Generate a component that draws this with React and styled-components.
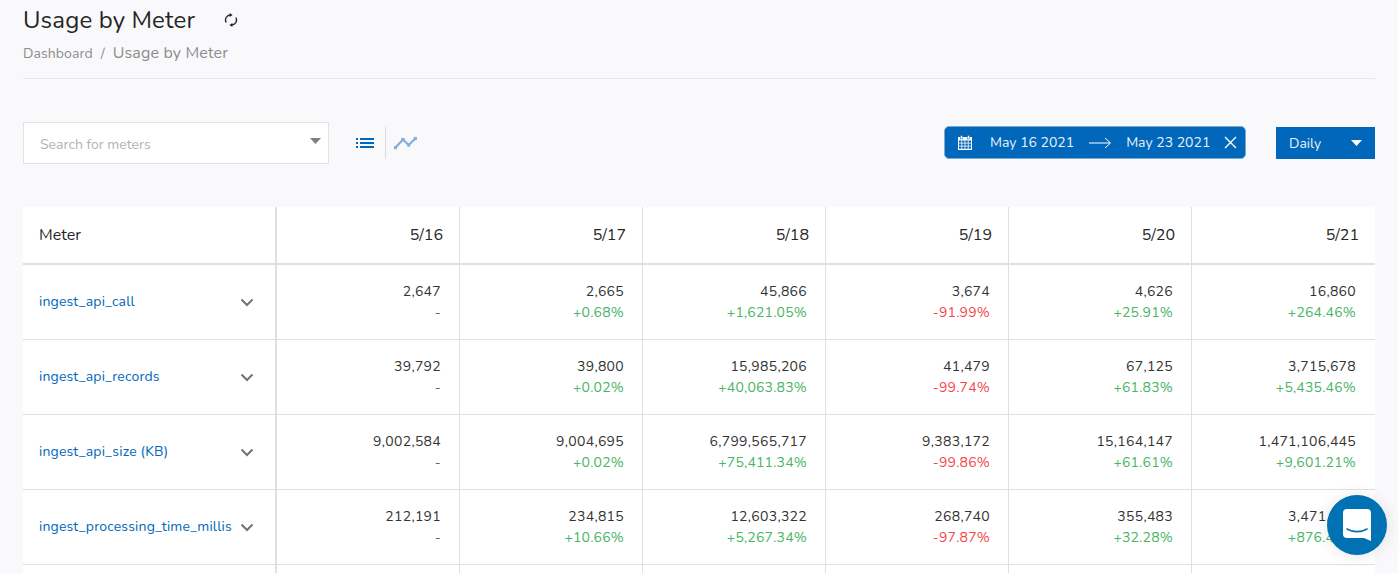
import React from 'react';
import styled, { createGlobalStyle } from 'styled-components';

const GlobalStyle = createGlobalStyle`
  html, body {
    margin: 0;
    height: 573px;
    overflow: hidden;
    background: #f9f9fb;
    font-family: "Nunito", "Lato", "Open Sans", sans-serif;
    color: #262626;
  }
`;

const dates = ['5/16', '5/17', '5/18', '5/19', '5/20', '5/21'];

const meters = [
  {
    name: 'ingest_api_call',
    values: [
      ['2,647', '-'], ['2,665', '+0.68%'], ['45,866', '+1,621.05%'],
      ['3,674', '-91.99%'], ['4,626', '+25.91%'], ['16,860', '+264.46%'],
    ],
  },
  {
    name: 'ingest_api_records',
    values: [
      ['39,792', '-'], ['39,800', '+0.02%'], ['15,985,206', '+40,063.83%'],
      ['41,479', '-99.74%'], ['67,125', '+61.83%'], ['3,715,678', '+5,435.46%'],
    ],
  },
  {
    name: 'ingest_api_size (KB)',
    values: [
      ['9,002,584', '-'], ['9,004,695', '+0.02%'], ['6,799,565,717', '+75,411.34%'],
      ['9,383,172', '-99.86%'], ['15,164,147', '+61.61%'], ['1,471,106,445', '+9,601.21%'],
    ],
  },
  {
    name: 'ingest_processing_time_millis',
    values: [
      ['212,191', '-'], ['234,815', '+10.66%'], ['12,603,322', '+5,267.34%'],
      ['268,740', '-97.87%'], ['355,483', '+32.28%'], ['3,471,000', '+876.41%'],
    ],
  },
];

const Page = styled.div`
  padding: 0 23px;
  height: 573px;
  box-sizing: border-box;
  overflow: hidden;
`;

const Header = styled.header`
  height: 78px;
  border-bottom: 1px solid #e6e6e8;
  box-sizing: content-box;
`;

const TitleRow = styled.div`
  display: flex;
  align-items: center;
  height: 40px;
`;

const Title = styled.h1`
  margin: 0;
  font-size: 24px;
  font-weight: 400;
  line-height: 40px;
  letter-spacing: 0.15px;
  color: #262626;
`;

const Refresh = styled.svg`
  display: block;
  width: 14px;
  height: 14px;
  margin-left: 29px;
`;

const Breadcrumbs = styled.nav`
  display: flex;
  align-items: baseline;
  height: 24px;
  padding-top: 1px;
  line-height: 24px;
  color: #8c8c8c;
`;

const Crumb = styled.span`
  font-size: ${p => (p.$last ? '16px' : '14px')};
  letter-spacing: ${p => (p.$last ? '0.15px' : '0.08px')};
`;

const Slash = styled.span`
  margin: 0 8px;
  font-size: 14px;
`;

const Toolbar = styled.div`
  display: flex;
  align-items: center;
  margin-top: 43px;
  height: 42px;
`;

const Search = styled.div`
  display: flex;
  align-items: center;
  justify-content: space-between;
  width: 306px;
  height: 42px;
  box-sizing: border-box;
  padding: 3px 7px 0 16px;
  background: #fff;
  border: 1px solid #e2e2e2;
  font-size: 14px;
  color: #b3b3b3;
`;

const SearchCaret = styled.svg`
  width: 11px;
  height: 6px;
  margin-top: -7px;
  fill: #7f7f7f;
`;

const ViewToggle = styled.div`
  display: flex;
  align-items: center;
  margin-left: 27px;
`;

const ViewIcon = styled.svg`
  display: block;
  width: ${p => p.$w}px;
  height: 16px;
`;

const ViewDivider = styled.div`
  width: 1px;
  height: 32px;
  margin: 0 8px 0 11px;
  background: #dcdcdc;
`;

const DatePicker = styled.div`
  display: flex;
  align-items: center;
  width: 302px;
  height: 33px;
  box-sizing: border-box;
  margin-left: auto;
  margin-top: -1px;
  padding: 0 8px 0 12px;
  background: #0067ba;
  border: 1px solid #7aa9d2;
  border-radius: 5px;
  color: #e8f1f9;
  font-size: 14px;
`;

const DateText = styled.span`
  white-space: nowrap;
`;

const DateArrow = styled.svg`
  flex: none;
  width: 24px;
  height: 12px;
  margin: 0 14px;
`;

const CalendarIcon = styled.svg`
  flex: none;
  width: 16px;
  height: 16px;
  margin-right: 17px;
`;

const ClearIcon = styled.svg`
  flex: none;
  width: 13px;
  height: 13px;
  margin-left: auto;
`;

const Interval = styled.div`
  display: flex;
  align-items: center;
  justify-content: space-between;
  width: 99px;
  height: 32px;
  box-sizing: border-box;
  margin-left: 30px;
  padding: 0 13px;
  background: #0067ba;
  color: #e8f1f9;
  font-size: 14px;
`;

const IntervalCaret = styled.svg`
  width: 11px;
  height: 6px;
  fill: #fff;
`;

const Card = styled.div`
  margin-top: 43px;
  background: #fff;
  border-radius: 4px 4px 0 0;
  overflow: hidden;
`;

const Table = styled.table`
  width: 1352px;
  table-layout: fixed;
  border-collapse: separate;
  border-spacing: 0;
`;

const HeadCell = styled.th`
  height: 56px;
  padding: 0 16px;
  box-sizing: content-box;
  font-size: 16px;
  font-weight: 400;
  color: #262626;
  text-align: ${p => (p.$left ? 'left' : 'right')};
  border-bottom: 2px solid #e0e0e0;
  border-right: ${p => (p.$last ? 'none' : p.$left ? '2px solid #e0e0e0' : '1px solid #e0e0e0')};
`;

const MeterCell = styled.td`
  height: 74px;
  padding: 0 21px 0 16px;
  border-bottom: 1px solid #e0e0e0;
  border-right: 2px solid #e0e0e0;
`;

const MeterInner = styled.div`
  display: flex;
  align-items: center;
  justify-content: space-between;
`;

const MeterName = styled.a`
  margin-top: -2px;
  font-size: 14px;
  letter-spacing: 0.17px;
  color: #0067ba;
  white-space: nowrap;
`;

const Chevron = styled.svg`
  flex: none;
  width: 14px;
  height: 9px;
`;

const ValueCell = styled.td`
  height: 74px;
  padding: 0 ${p => (p.$last ? '19px' : '18px')} 0 0;
  text-align: right;
  font-size: 14px;
  line-height: 21px;
  letter-spacing: 0.2px;
  border-bottom: 1px solid #e0e0e0;
  border-right: ${p => (p.$last ? 'none' : '1px solid #e0e0e0')};
`;

const Count = styled.div`
  color: #333;
  letter-spacing: 0.3px;
  white-space: nowrap;
`;

const toneColor = { up: '#48b565', down: '#f5474b', none: '#666' };

const Change = styled.div`
  color: ${p => toneColor[p.$tone]};
  white-space: nowrap;
`;

const ChatButton = styled.div`
  position: fixed;
  left: 1327px;
  top: 495px;
  width: 60px;
  height: 60px;
  display: flex;
  align-items: center;
  justify-content: center;
  border-radius: 50%;
  background: #0071b2;
  box-shadow: 0 1px 16px rgba(0, 0, 0, 0.1);
`;

const ChatIcon = styled.svg`
  width: 28px;
  height: 32px;
`;

function toneOf(change) {
  if (change === '-') return 'none';
  return change.startsWith('+') ? 'up' : 'down';
}

function App() {
  return (
    <Page>
      <GlobalStyle />
      <Header>
        <TitleRow>
          <Title>Usage by Meter</Title>
          <Refresh viewBox="0 0 14 14" fill="none" stroke="#262626" strokeWidth="1.4">
            <path d="M2.2 9.5A5 5 0 0 1 6.5 2" />
            <path d="M11.8 4.5A5 5 0 0 1 7.5 12" />
            <path d="M5.6 0l3 2-3 2z" fill="#262626" stroke="none" />
            <path d="M8.4 10l-3 2 3 2z" fill="#262626" stroke="none" />
          </Refresh>
        </TitleRow>
        <Breadcrumbs>
          <Crumb>Dashboard</Crumb>
          <Slash>/</Slash>
          <Crumb $last>Usage by Meter</Crumb>
        </Breadcrumbs>
      </Header>

      <Toolbar>
        <Search>
          Search for meters
          <SearchCaret viewBox="0 0 11 6"><path d="M0 0h11L5.5 6z" /></SearchCaret>
        </Search>
        <ViewToggle>
          <ViewIcon $w={18} viewBox="0 0 18 16">
            <g fill="#0067ba">
              <rect x="0" y="3" width="2" height="2" />
              <rect x="4" y="3" width="14" height="2" />
              <rect x="0" y="7" width="2" height="2" />
              <rect x="4" y="7" width="14" height="2" />
              <rect x="0" y="11" width="2" height="2" />
              <rect x="4" y="11" width="14" height="2" />
            </g>
          </ViewIcon>
          <ViewDivider />
          <ViewIcon $w={23} viewBox="0 0 23 16">
            <g fill="#7fb0dc" stroke="#7fb0dc">
              <polyline points="1.5,12.6 9,4.5 14.6,10 21.4,3.5" fill="none" strokeWidth="2.2" />
              <rect x="0" y="11.2" width="2.8" height="2.8" strokeWidth="0.4" />
              <rect x="7.6" y="3.1" width="2.8" height="2.8" strokeWidth="0.4" />
              <rect x="13.2" y="8.6" width="2.8" height="2.8" strokeWidth="0.4" />
              <rect x="20" y="2.1" width="2.8" height="2.8" strokeWidth="0.4" />
            </g>
          </ViewIcon>
        </ViewToggle>
        <DatePicker>
          <CalendarIcon viewBox="0 0 16 16">
            <rect x="1" y="2" width="14" height="13" fill="#fff" />
            <rect x="3.5" y="0.5" width="2" height="3.5" fill="#fff" stroke="#0067ba" strokeWidth="0.5" />
            <rect x="10.5" y="0.5" width="2" height="3.5" fill="#fff" stroke="#0067ba" strokeWidth="0.5" />
            <g fill="#0067ba">
              {[2, 5.2, 8.4, 11.6].flatMap(x =>
                [5.5, 8.5, 11.5].map(y => (
                  <rect key={`${x}-${y}`} x={x} y={y} width="2.4" height="2.2" />
                ))
              )}
            </g>
          </CalendarIcon>
          <DateText>May 16 2021</DateText>
          <DateArrow viewBox="0 0 24 12" fill="none" stroke="#fff" strokeWidth="1">
            <path d="M1 6h21M17 1l5.5 5-5.5 5" />
          </DateArrow>
          <DateText>May 23 2021</DateText>
          <ClearIcon viewBox="0 0 13 13" fill="none" stroke="#fff" strokeWidth="1.4">
            <path d="M1 1l11 11M12 1L1 12" />
          </ClearIcon>
        </DatePicker>
        <Interval>
          Daily
          <IntervalCaret viewBox="0 0 11 6"><path d="M0 0h11L5.5 6z" /></IntervalCaret>
        </Interval>
      </Toolbar>

      <Card>
        <Table>
          <colgroup>
            <col style={{ width: 254 }} />
            {dates.map(d => <col key={d} style={{ width: 183 }} />)}
          </colgroup>
          <thead>
            <tr>
              <HeadCell $left>Meter</HeadCell>
              {dates.map((d, i) => (
                <HeadCell key={d} $last={i === dates.length - 1}>{d}</HeadCell>
              ))}
            </tr>
          </thead>
          <tbody>
            {meters.map(m => (
              <tr key={m.name}>
                <MeterCell>
                  <MeterInner>
                    <MeterName>{m.name}</MeterName>
                    <Chevron viewBox="0 0 14 9" fill="none" stroke="#737373" strokeWidth="2">
                      <path d="M1.5 1.5L7 7l5.5-5.5" />
                    </Chevron>
                  </MeterInner>
                </MeterCell>
                {m.values.map(([count, change], i) => (
                  <ValueCell key={i} $last={i === m.values.length - 1}>
                    <Count>{count}</Count>
                    <Change $tone={toneOf(change)}>{change}</Change>
                  </ValueCell>
                ))}
              </tr>
            ))}
            <tr>
              <MeterCell />
              {dates.map((d, i) => <ValueCell key={d} $last={i === dates.length - 1} />)}
            </tr>
          </tbody>
        </Table>
      </Card>

      <ChatButton>
        <ChatIcon viewBox="0 0 28 32">
          <path d="M4 0h20a4 4 0 0 1 4 4v28l-7-3H4a4 4 0 0 1-4-4V4a4 4 0 0 1 4-4z" fill="#fff" />
          <path d="M4 20c6 3.5 14 3.5 20 0" fill="none" stroke="#0071b2" strokeWidth="1.6" strokeLinecap="round" />
        </ChatIcon>
      </ChatButton>
    </Page>
  );
}

export default App;
